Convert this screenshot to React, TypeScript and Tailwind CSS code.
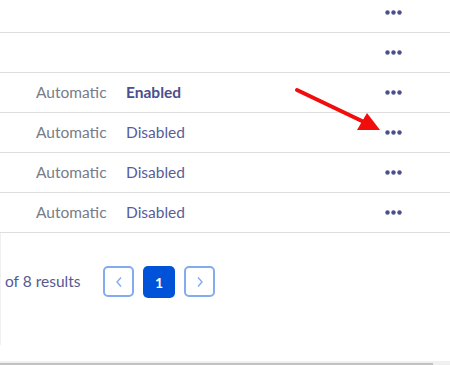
import React from 'react';

const rows = [
  { mode: '', status: '' },
  { mode: '', status: '' },
  { mode: 'Automatic', status: 'Enabled' },
  { mode: 'Automatic', status: 'Disabled' },
  { mode: 'Automatic', status: 'Disabled' },
  { mode: 'Automatic', status: 'Disabled' },
];

const Dots: React.FC = () => (
  <svg width="17" height="5" viewBox="0 0 17 5" className="text-[#4b4f8c]">
    <circle cx="2.5" cy="2.5" r="2.2" fill="currentColor" />
    <circle cx="8.5" cy="2.5" r="2.2" fill="currentColor" />
    <circle cx="14.5" cy="2.5" r="2.2" fill="currentColor" />
  </svg>
);

const App: React.FC = () => {
  return (
    <div className="relative w-[450px] h-[365px] overflow-hidden bg-white font-['Lato','Noto_Sans',sans-serif]">
      {/* Table rows */}
      <div className="-mt-[7px]">
        {rows.map((r, i) => (
          <div
            key={i}
            className="flex items-center h-[40px] border-b border-[#dedede] text-[15.5px]"
          >
            <span className="w-[90px] pl-[36px] box-content text-[#777c88]">{r.mode}</span>
            <span
              className={
                r.status === 'Enabled'
                  ? 'w-[200px] font-bold text-[#4a4f8f]'
                  : 'w-[200px] text-[#585d99]'
              }
            >
              {r.status}
            </span>
            <span className="ml-[59px] flex items-center">
              <Dots />
            </span>
          </div>
        ))}
      </div>

      {/* Pagination */}
      <div className="h-[112px] border-l border-[#f0f0f0] flex items-start pt-[33px]">
        <span className="w-[78px] pl-[4px] box-content text-[15.5px] text-[#555a92] leading-[31px] whitespace-nowrap">of 8 results</span>
        <div className="flex gap-[9px] ml-[20px]">
          <button className="w-[31px] h-[31px] rounded-[5px] border-2 border-[#84aaf0] flex items-center justify-center text-[#84aaf0]">
            <svg width="8" height="12" viewBox="0 0 8 12" fill="none" stroke="currentColor" strokeWidth="1.4">
              <path d="M6 1.5 L2 6 L6 10.5" />
            </svg>
          </button>
          <button className="w-[32px] h-[32px] rounded-[5px] bg-[#0052d9] text-white font-bold text-[14px] flex items-center justify-center">
            1
          </button>
          <button className="w-[31px] h-[31px] rounded-[5px] border-2 border-[#84aaf0] flex items-center justify-center text-[#84aaf0]">
            <svg width="8" height="12" viewBox="0 0 8 12" fill="none" stroke="currentColor" strokeWidth="1.4">
              <path d="M2 1.5 L6 6 L2 10.5" />
            </svg>
          </button>
        </div>
      </div>

      {/* Horizontal scrollbar */}
      <div className="absolute left-0 right-0 top-[361px] h-[4px] bg-[#f0f0f0]">
        <div className="mt-[2px] w-[433px] h-[4px] bg-[#c1c1c1]" />
      </div>

      {/* Annotation arrow */}
      <svg className="absolute left-0 top-0 pointer-events-none" width="450" height="365">
        <line x1="297" y1="90" x2="364" y2="122" stroke="#f20d0d" strokeWidth="4" strokeLinecap="round" />
        <polygon points="380,130 357,130 367,113" fill="#f20d0d" />
      </svg>
    </div>
  );
};

export default App;
